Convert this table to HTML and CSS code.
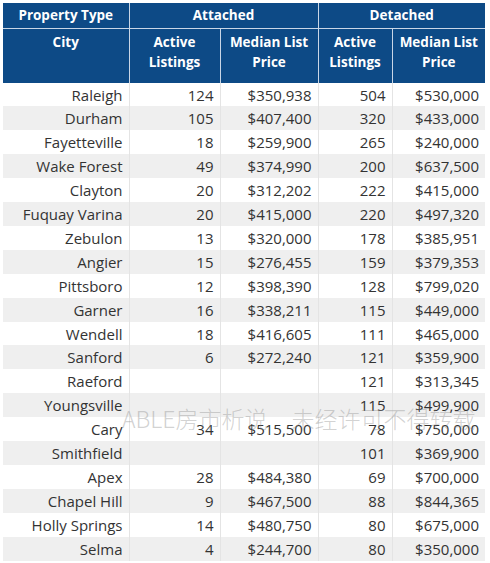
FILE: index.html
```html
<!DOCTYPE html>
<html>
<head>
<meta charset="utf-8">
<link rel="stylesheet" href="styles.css">
</head>
<body>
<div class="wrap">
<table class="grid">
  <colgroup>
    <col class="c-city"><col class="c-al"><col class="c-mp"><col class="c-dl"><col class="c-dp">
  </colgroup>
  <thead>
    <tr class="h1">
      <th>Property Type</th>
      <th colspan="2">Attached</th>
      <th colspan="2">Detached</th>
    </tr>
    <tr class="h2">
      <th>City</th>
      <th>Active<br>Listings</th>
      <th>Median List<br>Price</th>
      <th>Active<br>Listings</th>
      <th>Median List<br>Price</th>
    </tr>
  </thead>
  <tbody>
    <tr><td>Raleigh</td><td>124</td><td>$350,938</td><td>504</td><td>$530,000</td></tr>
    <tr><td>Durham</td><td>105</td><td>$407,400</td><td>320</td><td>$433,000</td></tr>
    <tr><td>Fayetteville</td><td>18</td><td>$259,900</td><td>265</td><td>$240,000</td></tr>
    <tr><td>Wake Forest</td><td>49</td><td>$374,990</td><td>200</td><td>$637,500</td></tr>
    <tr><td>Clayton</td><td>20</td><td>$312,202</td><td>222</td><td>$415,000</td></tr>
    <tr><td>Fuquay Varina</td><td>20</td><td>$415,000</td><td>220</td><td>$497,320</td></tr>
    <tr><td>Zebulon</td><td>13</td><td>$320,000</td><td>178</td><td>$385,951</td></tr>
    <tr><td>Angier</td><td>15</td><td>$276,455</td><td>159</td><td>$379,353</td></tr>
    <tr><td>Pittsboro</td><td>12</td><td>$398,390</td><td>128</td><td>$799,020</td></tr>
    <tr><td>Garner</td><td>16</td><td>$338,211</td><td>115</td><td>$449,000</td></tr>
    <tr><td>Wendell</td><td>18</td><td>$416,605</td><td>111</td><td>$465,000</td></tr>
    <tr><td>Sanford</td><td>6</td><td>$272,240</td><td>121</td><td>$359,900</td></tr>
    <tr><td>Raeford</td><td></td><td></td><td>121</td><td>$313,345</td></tr>
    <tr><td>Youngsville</td><td></td><td></td><td>115</td><td>$499,900</td></tr>
    <tr><td>Cary</td><td>34</td><td>$515,500</td><td>78</td><td>$750,000</td></tr>
    <tr><td>Smithfield</td><td></td><td></td><td>101</td><td>$369,900</td></tr>
    <tr><td>Apex</td><td>28</td><td>$484,380</td><td>69</td><td>$700,000</td></tr>
    <tr><td>Chapel Hill</td><td>9</td><td>$467,500</td><td>88</td><td>$844,365</td></tr>
    <tr><td>Holly Springs</td><td>14</td><td>$480,750</td><td>80</td><td>$675,000</td></tr>
    <tr><td>Selma</td><td>4</td><td>$244,700</td><td>80</td><td>$350,000</td></tr>
  </tbody>
</table>
<div class="watermark"><span class="wm-a">ABLE房市析说</span><span class="wm-b">未经许可不得转载</span></div>
</div>
</body>
</html>
```

FILE: styles.css
```css
html, body {
  margin: 0;
  padding: 0;
  background: #ffffff;
}

.wrap {
  position: relative;
  padding: 3px 0 0 3px;
}

.grid {
  border-collapse: collapse;
  table-layout: fixed;
  width: 482px;
  font-family: "Open Sans", "Noto Sans", sans-serif;
  color: #333333;
}

.c-city { width: 126px; }
.c-al { width: 91px; }
.c-mp { width: 98px; }
.c-dl { width: 74px; }
.c-dp { width: 93px; }

.grid th {
  background: #0d4a86;
  color: #ffffff;
  font-weight: 700;
  font-size: 13.5px;
  text-align: center;
  vertical-align: top;
  border-left: 1px solid #c9d6e6;
  padding: 0;
  line-height: 20px;
}

.grid th:first-child {
  border-left: none;
}

.grid .h1 th {
  height: 23px;
  line-height: 25px;
  border-bottom: 1px solid #c9d6e6;
}

.grid .h2 th {
  height: 54px;
  padding-top: 3px;
  box-sizing: border-box;
}

.grid td {
  font-size: 15px;
  text-align: right;
  padding: 2px 6px 0 0;
  height: 23.9px;
  box-sizing: border-box;
  line-height: 21.9px;
  border-left: 1px solid #e4e4e4;
  white-space: nowrap;
}

.grid td:first-child {
  border-left: none;
}

.grid tbody tr:nth-child(even) td {
  background: #efefef;
}

.watermark {
  position: absolute;
  left: 122px;
  top: 403px;
  font-family: "Noto Sans CJK SC", "Noto Sans", sans-serif;
  font-weight: 300;
  font-size: 23px;
  line-height: 30px;
  color: rgba(140, 140, 140, 0.4);
  display: flex;
  gap: 24px;
  white-space: nowrap;
  pointer-events: none;
}
```
